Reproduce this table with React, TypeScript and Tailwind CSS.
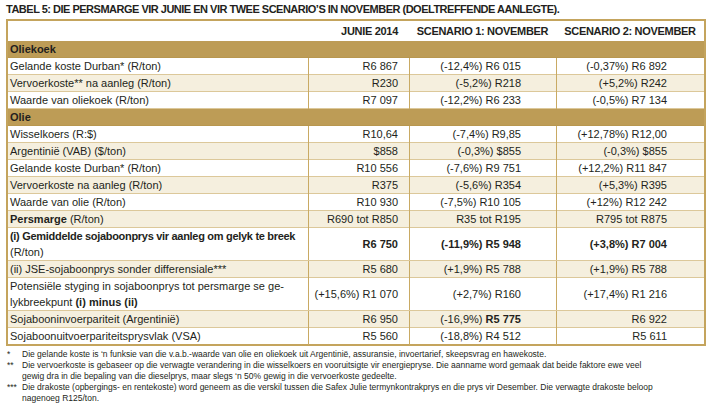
type RowProps = {
  label: React.ReactNode;
  a?: React.ReactNode;
  b?: React.ReactNode;
  c?: React.ReactNode;
  shade?: boolean;
  tall?: boolean;
  bold?: boolean;
};

const Row = ({ label, a, b, c, shade, tall, bold }: RowProps) => (
  <div
    className={`grid grid-cols-[300px_101px_147px_1fr] border-b border-[#dcc89a] ${
      shade ? "bg-[#f5efde]" : "bg-white"
    } ${tall ? "h-[33px]" : "h-[17px]"} ${bold ? "font-bold" : ""}`}
  >
    <div className="flex items-center whitespace-nowrap pl-[2px] leading-[16px]">{label}</div>
    <div className="flex items-center justify-end border-l border-[#c9aa63] pr-[11px]">{a}</div>
    <div className="flex items-center justify-end border-l border-[#c9aa63] pr-[35px]">{b}</div>
    <div className="flex items-center justify-end border-l border-[#c9aa63] pr-[37px]">{c}</div>
  </div>
);

const Band = ({ title }: { title: string }) => (
  <div className="flex h-[17px] items-center border-b border-[#b8974f] bg-[#bd9c56] pl-[2px] font-bold">
    {title}
  </div>
);

const notes = [
  {
    mark: "*",
    lines: [
      "Die gelande koste is ‘n funksie van die v.a.b.-waarde van olie en oliekoek uit Argentinië, assuransie, invoertarief, skeepsvrag en hawekoste.",
    ],
  },
  {
    mark: "**",
    lines: [
      "Die vervoerkoste is gebaseer op die verwagte verandering in die wisselkoers en vooruitsigte vir energiepryse. Die aanname word gemaak dat beide faktore ewe veel",
      "gewig dra in die bepaling van die dieselprys, maar slegs ‘n 50% gewig in die vervoerkoste gedeelte.",
    ],
  },
  {
    mark: "***",
    lines: [
      "Die drakoste (opbergings- en rentekoste) word geneem as die verskil tussen die Safex Julie termynkontrakprys en die prys vir Desember. Die verwagte drakoste beloop",
      "nagenoeg R125/ton.",
    ],
  },
];

export default function App() {
  return (
    <div className="h-[417px] w-[708px] bg-white px-[6px] pt-[2px] font-['Liberation_Sans',Arial,sans-serif] text-[11px] text-[#231f20]">
      <h1 className="mb-[3px] text-[11px] leading-[14px] font-bold tracking-[-0.5px]">
        TABEL 5: DIE PERSMARGE VIR JUNIE EN VIR TWEE SCENARIO’S IN NOVEMBER (DOELTREFFENDE AANLEGTE).
      </h1>

      <div className="w-[700px] border-2 border-[#c4a45d]">
        <div className="grid h-[20px] grid-cols-[300px_101px_147px_1fr] items-center bg-white text-[11px] font-bold tracking-[-0.3px]">
          <div />
          <div className="pr-[11px] text-right">JUNIE 2014</div>
          <div className="text-center">SCENARIO 1: NOVEMBER</div>
          <div className="text-center">SCENARIO 2: NOVEMBER</div>
        </div>

        <Band title="Oliekoek" />
        <Row label="Gelande koste Durban* (R/ton)" a="R6 867" b="(-12,4%) R6 015" c="(-0,37%) R6 892" />
        <Row shade label="Vervoerkoste** na aanleg (R/ton)" a="R230" b="(-5,2%) R218" c="(+5,2%) R242" />
        <Row label="Waarde van oliekoek (R/ton)" a="R7 097" b="(-12,2%) R6 233" c="(-0,5%) R7 134" />

        <Band title="Olie" />
        <Row label="Wisselkoers (R:$)" a="R10,64" b="(-7,4%) R9,85" c="(+12,78%) R12,00" />
        <Row shade label="Argentinië (VAB) ($/ton)" a="$858" b="(-0,3%) $855" c="(-0,3%) $855" />
        <Row label="Gelande koste Durban* (R/ton)" a="R10 556" b="(-7,6%) R9 751" c="(+12,2%) R11 847" />
        <Row shade label="Vervoerkoste na aanleg (R/ton)" a="R375" b="(-5,6%) R354" c="(+5,3%) R395" />
        <Row label="Waarde van olie (R/ton)" a="R10 930" b="(-7,5%) R10 105" c="(+12%) R12 242" />
        <Row
          shade
          label={
            <span>
              <b>Persmarge</b> (R/ton)
            </span>
          }
          a="R690 tot R850"
          b="R35 tot R195"
          c="R795 tot R875"
        />
        <Row
          tall
          label={
            <span>
              <b className="tracking-[-0.3px]">(i) Gemiddelde sojaboonprys vir aanleg om gelyk te breek</b>
              <br />
              (R/ton)
            </span>
          }
          a={<b>R6 750</b>}
          b={<b>(-11,9%) R5 948</b>}
          c={<b>(+3,8%) R7 004</b>}
        />
        <Row shade label="(ii) JSE-sojaboonprys sonder differensiale***" a="R5 680" b="(+1,9%) R5 788" c="(+1,9%) R5 788" />
        <Row
          tall
          label={
            <span>
              Potensiële styging in sojaboonprys tot persmarge se ge-
              <br />
              lykbreekpunt <b>(i) minus (ii)</b>
            </span>
          }
          a="(+15,6%) R1 070"
          b="(+2,7%) R160"
          c="(+17,4%) R1 216"
        />
        <Row
          shade
          label="Sojabooninvoerpariteit (Argentinië)"
          a="R6 950"
          b={
            <span>
              (-16,9%) <b>R5 775</b>
            </span>
          }
          c="R6 922"
        />
        <div className="grid h-[16px] grid-cols-[300px_101px_147px_1fr] bg-white">
          <div className="flex items-center pl-[2px]">Sojaboonuitvoerpariteitsprysvlak (VSA)</div>
          <div className="flex items-center justify-end border-l border-[#c9aa63] pr-[11px]">R5 560</div>
          <div className="flex items-center justify-end border-l border-[#c9aa63] pr-[35px]">(-18,8%) R4 512</div>
          <div className="flex items-center justify-end border-l border-[#c9aa63] pr-[37px]">R5 611</div>
        </div>
      </div>

      <div className="mt-[3px] text-[8.5px] leading-[11px]">
        {notes.map((n) => (
          <div key={n.mark} className="flex">
            <span className="w-[16px] shrink-0 pl-[1px]">{n.mark}</span>
            <div className="whitespace-nowrap">
              {n.lines.map((l) => (
                <div key={l}>{l}</div>
              ))}
            </div>
          </div>
        ))}
      </div>
    </div>
  );
}
